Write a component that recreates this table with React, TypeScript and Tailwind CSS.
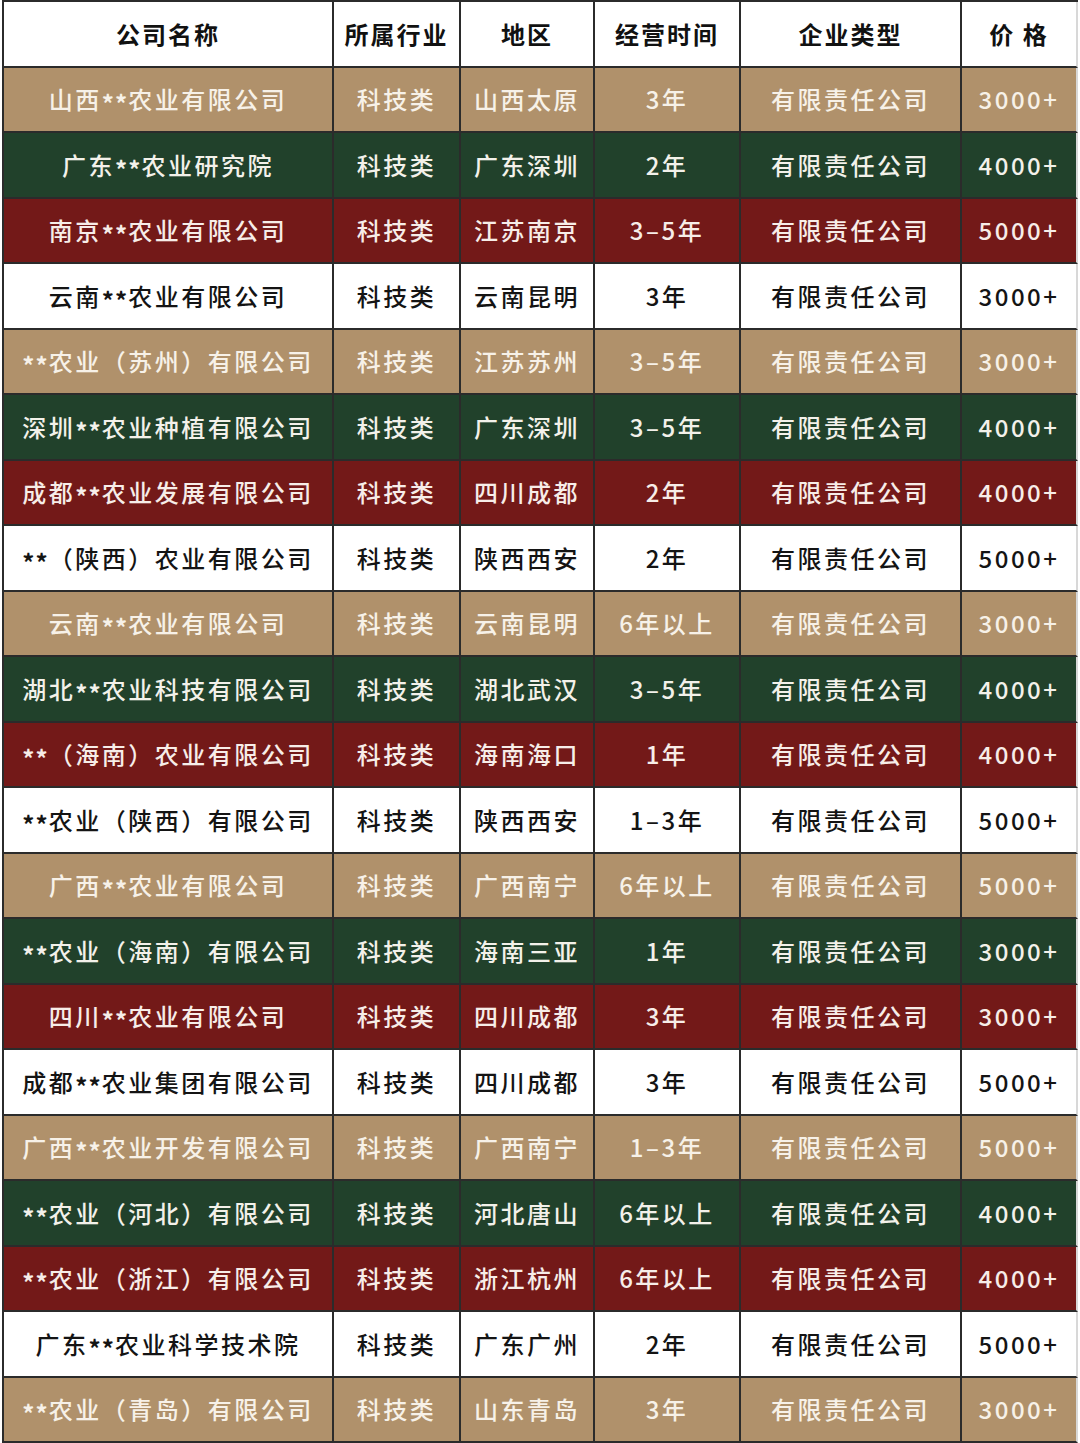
import React from "react";

type Row = [string, string, string, string, string, string];

const rows: Row[] = [
  ["山西**农业有限公司", "科技类", "山西太原", "3年", "有限责任公司", "3000+"],
  ["广东**农业研究院", "科技类", "广东深圳", "2年", "有限责任公司", "4000+"],
  ["南京**农业有限公司", "科技类", "江苏南京", "3–5年", "有限责任公司", "5000+"],
  ["云南**农业有限公司", "科技类", "云南昆明", "3年", "有限责任公司", "3000+"],
  ["**农业（苏州）有限公司", "科技类", "江苏苏州", "3–5年", "有限责任公司", "3000+"],
  ["深圳**农业种植有限公司", "科技类", "广东深圳", "3–5年", "有限责任公司", "4000+"],
  ["成都**农业发展有限公司", "科技类", "四川成都", "2年", "有限责任公司", "4000+"],
  ["**（陕西）农业有限公司", "科技类", "陕西西安", "2年", "有限责任公司", "5000+"],
  ["云南**农业有限公司", "科技类", "云南昆明", "6年以上", "有限责任公司", "3000+"],
  ["湖北**农业科技有限公司", "科技类", "湖北武汉", "3–5年", "有限责任公司", "4000+"],
  ["**（海南）农业有限公司", "科技类", "海南海口", "1年", "有限责任公司", "4000+"],
  ["**农业（陕西）有限公司", "科技类", "陕西西安", "1–3年", "有限责任公司", "5000+"],
  ["广西**农业有限公司", "科技类", "广西南宁", "6年以上", "有限责任公司", "5000+"],
  ["**农业（海南）有限公司", "科技类", "海南三亚", "1年", "有限责任公司", "3000+"],
  ["四川**农业有限公司", "科技类", "四川成都", "3年", "有限责任公司", "3000+"],
  ["成都**农业集团有限公司", "科技类", "四川成都", "3年", "有限责任公司", "5000+"],
  ["广西**农业开发有限公司", "科技类", "广西南宁", "1–3年", "有限责任公司", "5000+"],
  ["**农业（河北）有限公司", "科技类", "河北唐山", "6年以上", "有限责任公司", "4000+"],
  ["**农业（浙江）有限公司", "科技类", "浙江杭州", "6年以上", "有限责任公司", "4000+"],
  ["广东**农业科学技术院", "科技类", "广东广州", "2年", "有限责任公司", "5000+"],
  ["**农业（青岛）有限公司", "科技类", "山东青岛", "3年", "有限责任公司", "3000+"],
];

const headers = ["公司名称", "所属行业", "地区", "经营时间", "企业类型", "价 格"];

const rowStyles = [
  "bg-[#b0916b] text-[#f7f1e8]",
  "bg-[#21412b] text-[#f3f1ea]",
  "bg-[#731918] text-[#f7ede8]",
  "bg-white text-[#141414]",
];

function renderText(s: string) {
  const parts = s.split("**");
  if (parts.length === 1) return s;
  return (
    <>
      {parts[0]}
      <span className="inline-block translate-y-[4px] font-bold tracking-[1px]">**</span>
      {parts[1]}
    </>
  );
}

export default function App() {
  return (
    <div
      className="relative w-[1080px] h-[1443px] bg-white overflow-hidden"
      style={{ fontFamily: '"Noto Sans CJK SC", "Noto Sans", sans-serif' }}
    >
      <div className="ml-[2px] w-[1076px] border-l-2 border-t-2 border-[#2b2b2b] grid grid-cols-[330px_127px_134px_146px_221px_116px] auto-rows-[65.5px]">
        {headers.map((h, i) => (
          <div
            key={h}
            className={`flex items-center justify-center bg-white text-[#111] text-[24px] font-bold tracking-[2px] border-b-2 border-[#2b2b2b] ${
              i === 5 ? "border-r-2 border-r-[#d8d8d8] whitespace-pre" : "border-r-2"
            }`}
          >
            {h}
          </div>
        ))}
        {rows.map((r, ri) =>
          r.map((c, ci) => (
            <div
              key={`${ri}-${ci}`}
              className={`flex items-center justify-center text-[24px] font-medium tracking-[2.5px] whitespace-nowrap border-b-2 border-[#2b2b2b] ${
                rowStyles[ri % 4]
              } ${ci === 5 ? "border-r-2 border-r-[#d8d8d8]" : "border-r-2"}`}
            >
              {renderText(c)}
            </div>
          ))
        )}
      </div>
    </div>
  );
}
